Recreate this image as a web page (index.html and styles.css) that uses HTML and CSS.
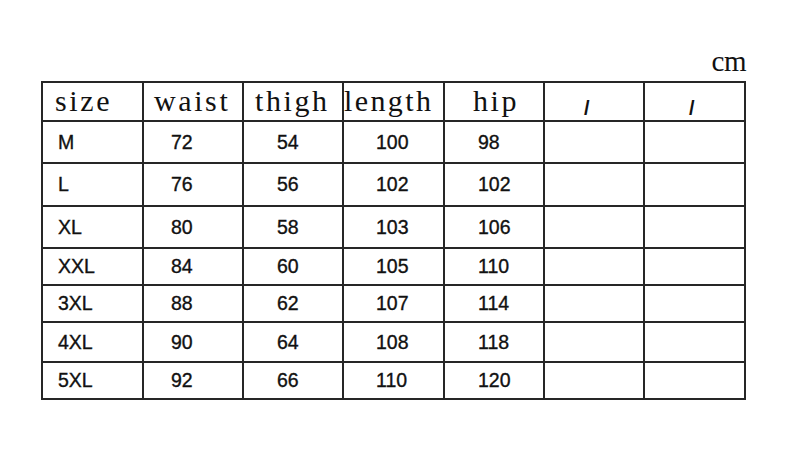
FILE: index.html
```html
<!DOCTYPE html>
<html>
<head>
<meta charset="utf-8">
<title>Size chart</title>
<link rel="stylesheet" href="styles.css">
</head>
<body>
<div class="page">
  <div class="unit-row"><span class="unit">cm</span></div>
  <div class="sheet">
    <div class="cell head col1">size</div>
    <div class="cell head col2">waist</div>
    <div class="cell head col3">thigh</div>
    <div class="cell head col4">length</div>
    <div class="cell head col5">hip</div>
    <div class="cell slash col6">/</div>
    <div class="cell slash col7">/</div>

    <div class="cell num col1">M</div>
    <div class="cell num col2">72</div>
    <div class="cell num col3">54</div>
    <div class="cell num col4">100</div>
    <div class="cell num col5">98</div>
    <div class="cell num"></div>
    <div class="cell num"></div>

    <div class="cell num col1">L</div>
    <div class="cell num col2">76</div>
    <div class="cell num col3">56</div>
    <div class="cell num col4">102</div>
    <div class="cell num col5">102</div>
    <div class="cell num"></div>
    <div class="cell num"></div>

    <div class="cell num col1">XL</div>
    <div class="cell num col2">80</div>
    <div class="cell num col3">58</div>
    <div class="cell num col4">103</div>
    <div class="cell num col5">106</div>
    <div class="cell num"></div>
    <div class="cell num"></div>

    <div class="cell num col1">XXL</div>
    <div class="cell num col2">84</div>
    <div class="cell num col3">60</div>
    <div class="cell num col4">105</div>
    <div class="cell num col5">110</div>
    <div class="cell num"></div>
    <div class="cell num"></div>

    <div class="cell num col1">3XL</div>
    <div class="cell num col2">88</div>
    <div class="cell num col3">62</div>
    <div class="cell num col4">107</div>
    <div class="cell num col5">114</div>
    <div class="cell num"></div>
    <div class="cell num"></div>

    <div class="cell num col1">4XL</div>
    <div class="cell num col2">90</div>
    <div class="cell num col3">64</div>
    <div class="cell num col4">108</div>
    <div class="cell num col5">118</div>
    <div class="cell num"></div>
    <div class="cell num"></div>

    <div class="cell num col1">5XL</div>
    <div class="cell num col2">92</div>
    <div class="cell num col3">66</div>
    <div class="cell num col4">110</div>
    <div class="cell num col5">120</div>
    <div class="cell num"></div>
    <div class="cell num"></div>
  </div>
</div>
</body>
</html>
```

FILE: styles.css
```css
html, body {
  margin: 0;
  padding: 0;
  background: #ffffff;
}

.page {
  padding-left: 41px;
  width: 705px;
}

.unit-row {
  height: 81px;
  display: flex;
  justify-content: flex-end;
  align-items: flex-end;
}

.unit {
  font-family: "Liberation Serif", serif;
  font-size: 29px;
  line-height: 30px;
  letter-spacing: -0.5px;
  margin-bottom: 5px;
  margin-right: 0px;
  color: #111;
}

.sheet {
  display: grid;
  grid-template-columns: 99px 98px 98px 99px 98px 98px 99px;
  grid-template-rows: 37px 40px 41px 40px 35px 35px 38px 35px;
  gap: 2px;
  padding: 2px;
  background: #262626;
  width: max-content;
}

.cell {
  background: #ffffff;
  color: #111;
  white-space: nowrap;
  overflow: visible;
}

.head {
  font-family: "Liberation Serif", serif;
  font-size: 30px;
  line-height: 36px;
  letter-spacing: 2.6px;
}

.head.col1 { padding-left: 12px; }
.head.col2 { padding-left: 10px; }
.head.col3 { padding-left: 11px; }
.head.col4 { padding-left: 0px; letter-spacing: 2.4px; }
.head.col5 { padding-left: 28px; }

.slash {
  font-family: "Liberation Sans", Arial, sans-serif;
  font-size: 20px;
  font-weight: bold;
  line-height: 20px;
  padding-top: 15px;
  box-sizing: border-box;
}

.slash.col6 { padding-left: 39px; }
.slash.col7 { padding-left: 44px; }

.num {
  font-family: "Liberation Sans", Arial, sans-serif;
  font-size: 19.5px;
  -webkit-text-stroke: 0.35px #111;
  display: flex;
  align-items: center;
}

.num.col1 { padding-left: 15px; }
.num.col2 { padding-left: 27px; }
.num.col3 { padding-left: 33px; }
.num.col4 { padding-left: 32px; }
.num.col5 { padding-left: 33px; }
```
